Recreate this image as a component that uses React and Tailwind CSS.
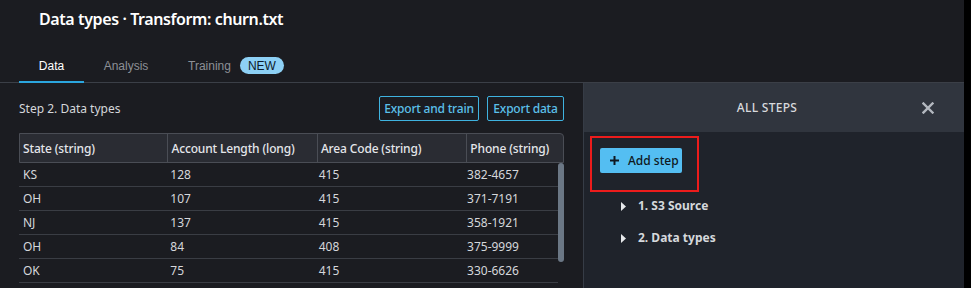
import React from "react";

const rows = [
  ["KS", "128", "415", "382-4657"],
  ["OH", "107", "415", "371-7191"],
  ["NJ", "137", "415", "358-1921"],
  ["OH", "84", "408", "375-9999"],
  ["OK", "75", "415", "330-6626"],
];

const cols = ["State (string)", "Account Length (long)", "Area Code (string)", "Phone (string)"];
const widths = ["w-[149px]", "w-[150px]", "w-[150px]", "w-[96px]"];

export default function App() {
  return (
    <div className="w-[971px] h-[288px] overflow-hidden flex bg-black" style={{ fontFamily: '"Noto Sans", sans-serif' }}>
      <div className="w-[964px] h-full flex flex-col bg-[#1b1c21]">
        {/* title */}
        <div className="h-[37px] flex items-center pl-[39px] text-[16px] font-semibold text-white tracking-[-0.4px]">
          Data types · Transform: churn.txt
        </div>
        {/* tabs */}
        <div className="h-[46px] flex items-end pl-[19px] border-b border-[#3b3f47]" style={{ fontFamily: '"Liberation Sans", Arial, sans-serif' }}>
          <div className="w-[65px] h-full flex items-end justify-center pb-[7px] text-[12px] text-white border-b-2 border-[#2ba6de] -mb-px">
            <div className="h-[17px] flex items-center">Data</div>
          </div>
          <div className="w-[84px] h-full flex items-end justify-center pb-[8px] text-[12px] text-[#8d9096]">
            <div className="h-[17px] flex items-center">Analysis</div>
          </div>
          <div className="h-full flex items-end pl-[20px] pb-[8px] text-[12px] text-[#8d9096]">
            <div className="h-[17px] flex items-center">
              Training
              <span className="ml-[9px] h-[17px] w-[44px] rounded-full bg-[#8dd0f5] text-[#0f1b2a] text-[12px] flex items-center justify-center">NEW</span>
            </div>
          </div>
        </div>
        {/* body */}
        <div className="flex-1 flex min-h-0">
          <div className="w-[583px] pl-[19px] pr-[19px] flex flex-col">
            <div className="mt-[13px] h-[25px] flex items-center justify-between">
              <div className="text-[12px] text-[#d5d7db]">Step 2. Data types</div>
              <div className="flex gap-[8px]">
                <button className="h-[25px] w-[100px] border border-[#3fb3e0] rounded-[2px] text-[#5cc0ea] text-[12px] font-medium flex items-center justify-center tracking-[-0.2px]">Export and train</button>
                <button className="h-[25px] w-[77px] border border-[#3fb3e0] rounded-[2px] text-[#5cc0ea] text-[12px] font-medium flex items-center justify-center tracking-[-0.2px]">Export data</button>
              </div>
            </div>
            <div className="mt-[12px] w-[545px]">
              <div className="flex h-[30px] bg-[#2a2c33] border border-[#4a4d55] rounded-tr-[4px]">
                {cols.map((c, i) => (
                  <div key={c} className={`${widths[i]} ${i < 3 ? "border-r border-[#4a4d55]" : ""} flex items-center pl-[3px] pt-[2px] text-[12px] font-medium text-[#e4e6ea] tracking-[-0.15px]`}>
                    {c}
                  </div>
                ))}
              </div>
              <div className="flex">
                <div className="w-[539px]">
                  {rows.map((r, ri) => (
                    <div key={ri} className="flex h-[24px] border-b border-[#3a3d44]">
                      {r.map((v, i) => (
                        <div key={i} className={`${widths[i]} flex items-center pl-[4px] text-[12px] text-[#d5d7db]`}>{v}</div>
                      ))}
                    </div>
                  ))}
                </div>
                <div className="w-[6px] flex flex-col">
                  <div className="h-[99px] w-[6px] rounded-full bg-[#6b7785]"></div>
                </div>
              </div>
            </div>
          </div>
          {/* right panel */}
          <div className="w-[381px] border-l border-[#363c46] bg-[#1f232b] flex flex-col">
            <div className="h-[49px] bg-[#30353e] flex items-center pl-[28px] pr-[30px]">
              <div className="flex-1 text-center text-[12px] font-medium text-[#d8dadd] tracking-[0.3px]">ALL STEPS</div>
              <svg width="12" height="12" viewBox="0 0 12 12">
                <path d="M1.5 1.5 L10.5 10.5 M10.5 1.5 L1.5 10.5" stroke="#b3b8bf" strokeWidth="2.4" strokeLinecap="square" />
              </svg>
            </div>
            <div className="pl-[6px] pt-[4px]">
              <div className="w-[109px] h-[56px] border-2 border-[#ec1c1c] pl-[8px] pt-[10px]">
                <button className="w-[82px] h-[25px] bg-[#54bef2] rounded-[2px] flex items-center pl-[10px] gap-[9px] text-[12px] font-medium text-[#0f1720]">
                  <svg width="9" height="9" viewBox="0 0 9 9">
                    <path d="M4.5 0 V9 M0 4.5 H9" stroke="#0f1720" strokeWidth="2" />
                  </svg>
                  Add step
                </button>
              </div>
              <div className="pl-[31px] -mt-[2px] flex flex-col">
                {["1. S3 Source", "2. Data types"].map((t) => (
                  <div key={t} className="h-[32px] flex items-center gap-[12px] text-[12px] font-bold text-[#d5d8dc]">
                    <svg width="5" height="9" viewBox="0 0 5 9">
                      <path d="M0 0 L5 4.5 L0 9 Z" fill="#e6e8ea" />
                    </svg>
                    {t}
                  </div>
                ))}
              </div>
            </div>
          </div>
        </div>
      </div>
      <div className="w-[7px] h-full bg-black"></div>
    </div>
  );
}
